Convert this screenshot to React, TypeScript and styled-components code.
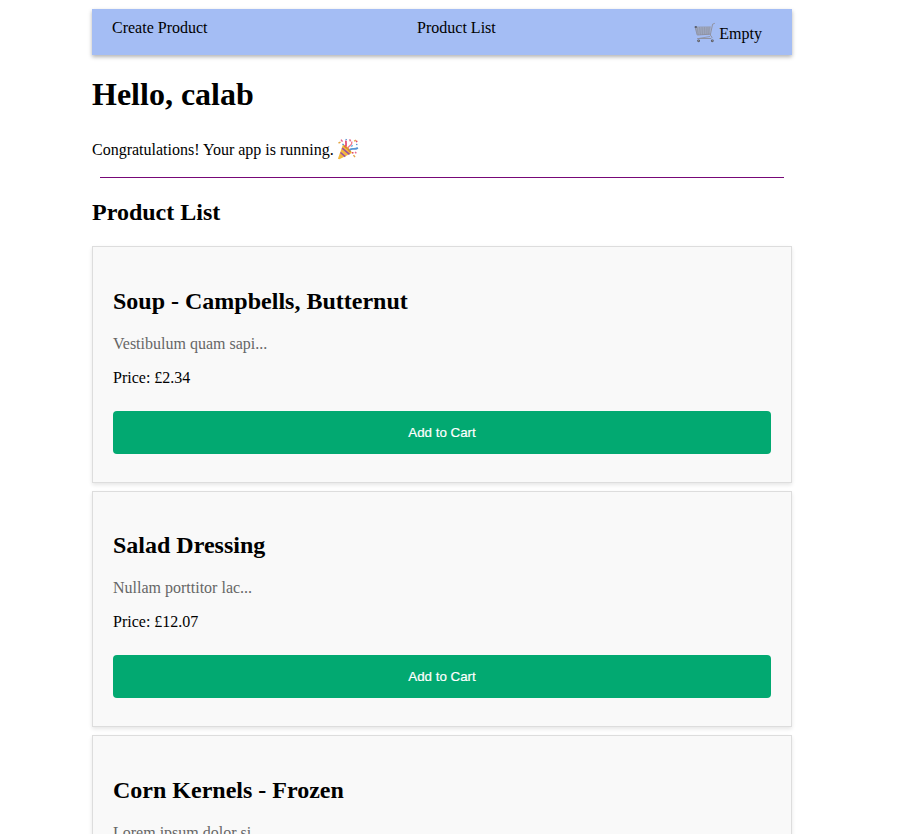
import React from "react";
import styled, { createGlobalStyle } from "styled-components";

const GlobalStyle = createGlobalStyle`
  body {
    margin: 0;
    background: #fff;
    color: #000;
    font-family: "Liberation Serif", "Times New Roman", serif;
    font-size: 16px;
  }
`;

const Viewport = styled.div`
  height: 834px;
  overflow: hidden;
`;

const Page = styled.div`
  width: 700px;
  margin-left: 92px;
  padding-top: 9px;
`;

const Nav = styled.nav`
  display: flex;
  justify-content: space-between;
  box-sizing: border-box;
  height: 46px;
  padding: 10px 30px 0 20px;
  background: #a4bdf4;
  box-shadow: 0 2px 4px rgba(0, 0, 0, 0.3);
  line-height: 18px;
`;

const NavLink = styled.a`
  color: #000;
  text-decoration: none;
`;

const ListLink = styled(NavLink)`
  padding-left: 11px;
`;

const CartLink = styled(NavLink)`
  display: flex;
  margin-top: 6px;
  gap: 3px;
`;

const EmojiSvg = styled.svg`
  width: 22px;
  height: 22px;
  margin-top: -3px;
`;

const Greeting = styled.h1`
  margin: 21px 0 0;
  font-size: 32px;
  line-height: 37px;
`;

const Status = styled.p`
  display: flex;
  gap: 3px;
  margin: 28px 0 0;
  line-height: 18px;
`;

const Divider = styled.hr`
  height: 1px;
  margin: 17px 8px 0;
  border: 0;
  background: #770877;
`;

const SectionTitle = styled.h2`
  margin: 20px 0 20.1px;
  font-size: 24px;
  line-height: 28px;
`;

const Products = styled.div`
  display: flex;
  flex-direction: column;
  gap: 8px;
`;

const Card = styled.article`
  box-sizing: border-box;
  height: 236.5px;
  padding: 40.5px 20px 0;
  border: 1px solid #ddd;
  background: #f9f9f9;
  box-shadow: 0 2px 4px rgba(0, 0, 0, 0.1);
`;

const ProductName = styled.h2`
  margin: 0;
  font-size: 24px;
  line-height: 27px;
`;

const Description = styled.p`
  margin: 20px 0 0;
  color: #666;
  line-height: 18px;
`;

const Price = styled.p`
  margin: 16px 0 0;
  line-height: 18px;
`;

const AddButton = styled.button`
  display: block;
  width: 100%;
  height: 43px;
  margin: 24px 0 0;
  padding: 0;
  border: 0;
  border-radius: 4px;
  background: #02a971;
  color: #fff;
  font: 13.333px "Liberation Sans", Arial, sans-serif;
  -webkit-text-stroke: 0.2px #fff;
`;

const CartIcon = () => (
  <EmojiSvg viewBox="0 0 22 22" fill="none" aria-hidden="true">
    <path d="M1 5 17 4.5 16 12 3.2 13Z" fill="#a6afc9" />
    <path
      d="M1 5h15.8M1.5 7h15M2 9h14.3M2.5 11h13.5M3 5l1.3 8M5.5 5l1 8M8 5l.6 8M10.5 5l.2 7.5M13 5l-.2 7.5M15.2 5l-.6 7.5"
      stroke="#8b91a3"
      strokeWidth=".6"
    />
    <path
      d="m20.8 1.3-2.2.9L16.3 13 18 15.3l-1 1.2H3.2M3.3 13l13-.8"
      stroke="#8e8d98"
      strokeWidth=".9"
      strokeLinejoin="round"
    />
    <path d="m1 4.8 2.2 8.3M4.5 16.5l11.5-2" stroke="#8b8e9c" strokeWidth=".8" />
    <path d="M.8 4.1h2v1.8h-2z" fill="#555b69" />
    <circle cx="4.6" cy="18.8" r="1.4" fill="#55545b" />
    <circle cx="18.3" cy="18.8" r="1.4" fill="#55545b" />
    <circle cx="4.6" cy="18.8" r=".5" fill="#bbb" />
    <circle cx="18.3" cy="18.8" r=".5" fill="#bbb" />
  </EmojiSvg>
);

const PartyIcon = () => (
  <EmojiSvg viewBox="0 0 22 22" fill="none" aria-hidden="true">
    <path d="M.9 20.7 6 6.5c3.2.4 8.2 5.4 8.9 8.6L2.4 21.2Z" fill="#f3b83f" />
    <path d="m5.2 10.2 7.3 6.1M3.5 14.5l4.8 4.2" stroke="#9950a0" strokeWidth="1.6" />
    <path d="M7.1 8.1c2.5 1.3 4.8 3.3 6.4 6" stroke="#d98b24" strokeWidth="1.5" />
    <path d="M8.2 8.5C10.5 6.7 8 4.7 9.2 2.8" stroke="#e44c78" strokeWidth="1.8" />
    <path d="M11 10.5c.5-3.8 4.7-2.1 3.7-7" stroke="#f1798f" strokeWidth="1.3" />
    <path d="M12.6 12c2.6-2.3 4.4.2 8.3-2.1" stroke="#5795d5" strokeWidth="1.8" />
    <path d="m14 8.5 1.8-1.2" stroke="#71b5e5" strokeWidth="1.5" />
    <path d="m4 1.6 1.5 2M12.6 1.4l1 2M18.2 13.8l1 1.6" stroke="#e7678d" strokeWidth="1.5" />
    <path d="m1.5 5 2-.9M17.1 3.3l1.8-1.3M16.5 17.2l1.5 2" stroke="#e3a443" strokeWidth="1.4" />
    <path d="m5.4 6 1.3.9M8.6 1.3l1.2.7M19.1 6.3l1.3.4" stroke="#558fce" strokeWidth="1.4" />
    <path d="m18.9 3.8 1.4-.8M15.8 14l-.2 1.6" stroke="#e34e64" strokeWidth="1.5" />
  </EmojiSvg>
);

const products = [
  { name: "Soup - Campbells, Butternut", description: "Vestibulum quam sapi...", price: "2.34" },
  { name: "Salad Dressing", description: "Nullam porttitor lac...", price: "12.07" },
  { name: "Corn Kernels - Frozen", description: "Lorem ipsum dolor si...", price: "" },
];

export default function App() {
  return (
    <Viewport>
      <GlobalStyle />
      <Page>
        <Nav>
          <NavLink>Create Product</NavLink>
          <ListLink>Product List</ListLink>
          <CartLink>
            <CartIcon />
            Empty
          </CartLink>
        </Nav>
        <Greeting>Hello, calab</Greeting>
        <Status>
          Congratulations! Your app is running.
          <PartyIcon />
        </Status>
        <Divider />
        <SectionTitle>Product List</SectionTitle>
        <Products>
          {products.map((product) => (
            <Card key={product.name}>
              <ProductName>{product.name}</ProductName>
              <Description>{product.description}</Description>
              {product.price && (
                <>
                  <Price>Price: £{product.price}</Price>
                  <AddButton>Add to Cart</AddButton>
                </>
              )}
            </Card>
          ))}
        </Products>
      </Page>
    </Viewport>
  );
}
